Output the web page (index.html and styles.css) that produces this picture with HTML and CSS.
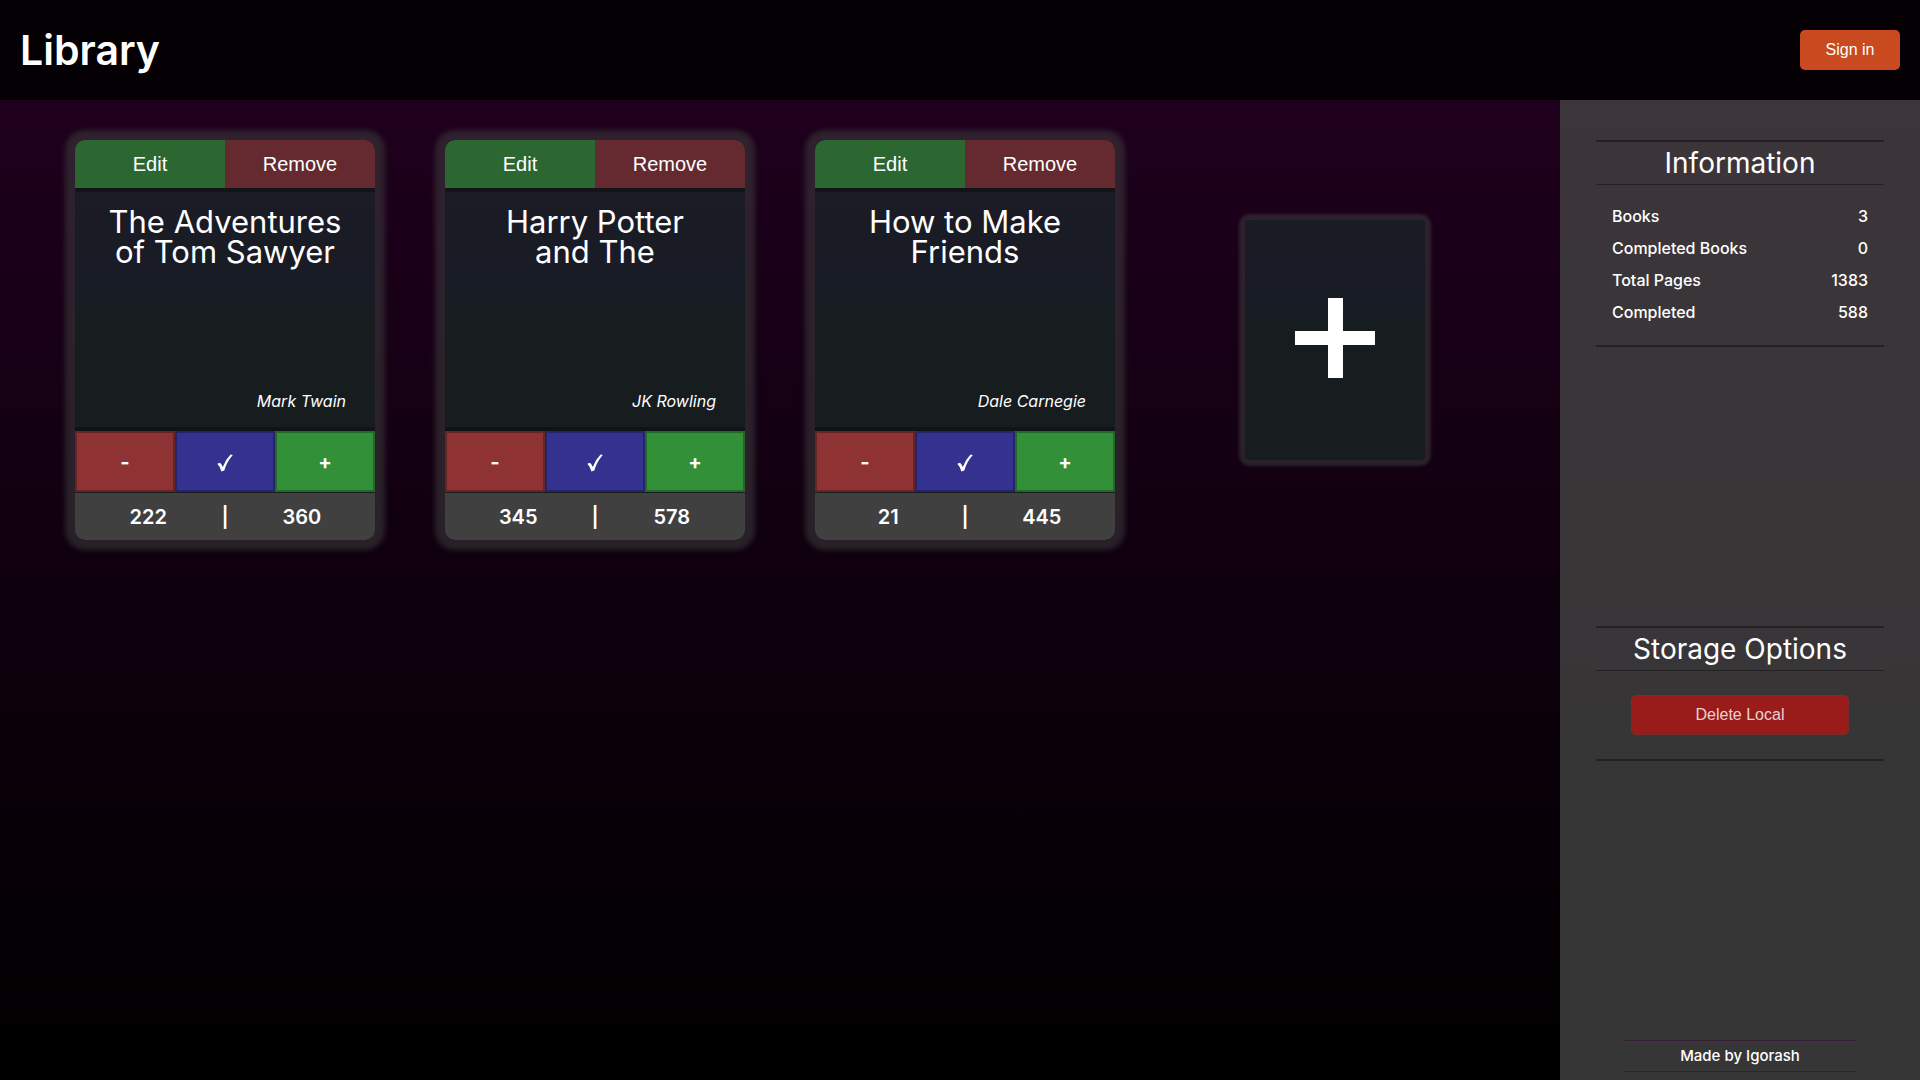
FILE: index.html
```html
<!DOCTYPE html>
<html lang="en">
<head>
<meta charset="utf-8">
<meta name="viewport" content="width=device-width, initial-scale=1">
<title>Library</title>
<link rel="stylesheet" href="styles.css">
</head>
<body>
<header class="header">
  <h1 class="logo">Library</h1>
  <button class="sign-in" type="button">Sign in</button>
</header>
<div class="layout">
  <main class="books">
    <article class="card">
      <div class="card-actions">
        <button class="edit" type="button">Edit</button>
        <button class="remove" type="button">Remove</button>
      </div>
      <div class="card-body">
        <h2 class="title">The Adventures of Tom Sawyer</h2>
        <p class="author">Mark Twain</p>
      </div>
      <div class="progress">
        <button class="minus" type="button">-</button>
        <button class="done" type="button" aria-label="Complete"><svg class="check" viewBox="0 0 16 18"><path d="M0.300 9.800L3 8.700Q5 10.500 5.800 13Q8.500 5.500 13.600 0.500L15.800 1Q9.600 8 7.300 16.500L4.400 17.400Q3 12.500 0.300 9.800Z"/></svg></button>
        <button class="plus" type="button">+</button>
      </div>
      <div class="pages"><span>222</span><span>|</span><span>360</span></div>
    </article>
    <article class="card">
      <div class="card-actions">
        <button class="edit" type="button">Edit</button>
        <button class="remove" type="button">Remove</button>
      </div>
      <div class="card-body">
        <h2 class="title">Harry Potter and The</h2>
        <p class="author">JK Rowling</p>
      </div>
      <div class="progress">
        <button class="minus" type="button">-</button>
        <button class="done" type="button" aria-label="Complete"><svg class="check" viewBox="0 0 16 18"><path d="M0.300 9.800L3 8.700Q5 10.500 5.800 13Q8.500 5.500 13.600 0.500L15.800 1Q9.600 8 7.300 16.500L4.400 17.400Q3 12.500 0.300 9.800Z"/></svg></button>
        <button class="plus" type="button">+</button>
      </div>
      <div class="pages"><span>345</span><span>|</span><span>578</span></div>
    </article>
    <article class="card">
      <div class="card-actions">
        <button class="edit" type="button">Edit</button>
        <button class="remove" type="button">Remove</button>
      </div>
      <div class="card-body">
        <h2 class="title">How to Make Friends</h2>
        <p class="author">Dale Carnegie</p>
      </div>
      <div class="progress">
        <button class="minus" type="button">-</button>
        <button class="done" type="button" aria-label="Complete"><svg class="check" viewBox="0 0 16 18"><path d="M0.300 9.800L3 8.700Q5 10.500 5.800 13Q8.500 5.500 13.600 0.500L15.800 1Q9.600 8 7.300 16.500L4.400 17.400Q3 12.500 0.300 9.800Z"/></svg></button>
        <button class="plus" type="button">+</button>
      </div>
      <div class="pages"><span>21</span><span>|</span><span>445</span></div>
    </article>
    <button class="add" type="button" aria-label="Add book"><svg class="add-icon" viewBox="0 0 80 80"><path d="M33 0H48V33H80V47H48V80H33V47H0V33H33Z"/></svg></button>
  </main>
  <aside class="sidebar">
    <section class="panel info">
      <h2 class="panel-title">Information</h2>
      <dl class="stats">
        <div class="stat"><dt>Books</dt><dd>3</dd></div>
        <div class="stat"><dt>Completed Books</dt><dd>0</dd></div>
        <div class="stat"><dt>Total Pages</dt><dd>1383</dd></div>
        <div class="stat"><dt>Completed</dt><dd>588</dd></div>
      </dl>
    </section>
    <section class="panel storage">
      <h2 class="panel-title">Storage Options</h2>
      <button class="delete" type="button">Delete Local</button>
    </section>
    <footer class="credit">Made by Igorash</footer>
  </aside>
</div>
</body>
</html>
```
FILE: styles.css
```css
* {
  box-sizing: border-box;
  margin: 0;
  padding: 0;
}

body {
  display: flex;
  flex-direction: column;
  min-height: 100vh;
  color: #fff;
  font-family: Inter, sans-serif;
  background: linear-gradient(#220020, #000);
}

button {
  border: 0;
  color: #fff;
  font-family: "Liberation Sans", Arial, sans-serif;
  cursor: pointer;
}

.header {
  display: flex;
  align-items: center;
  justify-content: space-between;
  height: 100px;
  padding: 0 20px;
  background: rgba(0, 0, 0, 0.85);
}

.logo {
  font-size: 41px;
  font-weight: 600;
}

.sign-in {
  width: 100px;
  height: 40px;
  border-radius: 5px;
  background: #c94a1e;
  font-size: 16px;
}

.layout {
  display: flex;
  flex: 1;
}

.books {
  display: grid;
  flex: 1;
  grid-template-columns: repeat(auto-fill, 300px);
  align-content: start;
  justify-content: center;
  gap: 70px;
  padding: 40px 20px;
}

.card {
  display: flex;
  flex-direction: column;
  height: 400px;
  overflow: hidden;
  border-radius: 10px;
  background: linear-gradient(#1c1b25, #181c25 40%, #171c1f 46%, #171c1f);
  box-shadow: 0 0 5px 10px rgba(66, 66, 66, 0.5);
}

.card-actions {
  display: grid;
  grid-template-columns: 1fr 1fr;
  height: 52px;
  border-bottom: 4px solid #13131a;
}

.card-actions button {
  font-size: 20px;
}

.edit {
  background: #2c6631;
}

.remove {
  background: #652a2f;
}

.card-body {
  display: flex;
  flex: 1;
  flex-direction: column;
  justify-content: space-between;
  padding: 15px 29px;
  border-bottom: 4px solid #111417;
}

.title {
  padding: 0 4px;
  font-size: 31px;
  font-weight: 400;
  line-height: 30px;
  text-align: center;
}

.author {
  font-size: 16px;
  font-style: italic;
  line-height: 22px;
  text-align: right;
}

.progress {
  display: grid;
  grid-template-columns: repeat(3, 1fr);
  height: 62px;
  padding-bottom: 1px;
}

.progress button {
  border: 2px solid;
  font-family: Inter, sans-serif;
  font-size: 20px;
  font-weight: 700;
}

.progress .minus {
  border-color: #652527;
  background: #8f3234;
}

.progress .done {
  border-color: #252468;
  background: #35328f;
}

.progress .plus {
  border-color: #246728;
  background: #329138;
}

.check {
  width: 16px;
  height: 18px;
  fill: #fff;
  vertical-align: middle;
}

.pages {
  display: grid;
  grid-template-columns: 1fr auto 1fr;
  height: 47px;
  align-items: center;
  background: #404040;
  font-size: 20px;
  font-weight: 600;
  line-height: 24px;
  text-align: center;
}

.add {
  display: grid;
  width: 180px;
  height: 240px;
  padding-bottom: 4px;
  place-items: center;
  place-content: center;
  place-self: center;
  border-radius: 5px;
  background: linear-gradient(#1a1b25, #181c25 34%, #171c1f 44%, #171c1f);
  box-shadow: 0 0 3px 6px rgba(66, 66, 66, 0.5);
}

.add-icon {
  width: 80px;
  height: 80px;
  fill: #fff;
}

.sidebar {
  display: grid;
  width: 360px;
  grid-template-rows: 27fr 23fr auto;
  justify-items: center;
  padding: 40px 36px 8px;
  background: linear-gradient(#3c353a, #363636 75%);
}

.panel {
  display: flex;
  width: 100%;
  flex-direction: column;
  align-items: center;
  align-self: start;
  border: solid #242124;
  border-width: 2px 0;
}

.panel-title {
  width: 100%;
  border-bottom: 1px solid #242124;
  font-size: 28px;
  font-weight: 400;
  line-height: 42px;
  text-align: center;
}

.stats {
  width: 100%;
  padding: 15px 16px 17px;
  font-size: 16px;
  font-weight: 500;
  line-height: 32px;
}

.stat {
  display: flex;
  justify-content: space-between;
}

.storage {
  padding-bottom: 24px;
}

.delete {
  width: 218px;
  height: 40px;
  margin-top: 24px;
  border: 1px solid #7a2b2b;
  border-radius: 5px;
  background: #991c1b;
  color: #ebd2d2;
  font-size: 16px;
}

.credit {
  width: 232px;
  border: solid #372037;
  border-width: 1px 0;
  font-size: 15px;
  font-weight: 500;
  line-height: 30px;
  text-align: center;
}
```
